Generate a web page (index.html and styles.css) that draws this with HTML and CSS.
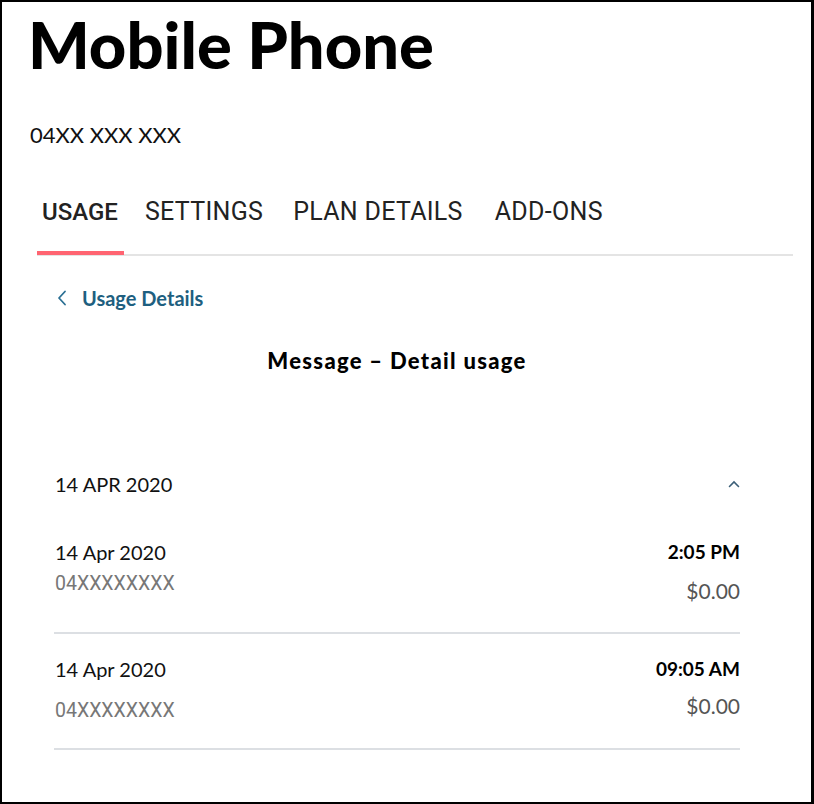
FILE: index.html
```html
<!DOCTYPE html>
<html lang="en">
  <head>
    <meta charset="UTF-8" />
    <meta name="viewport" content="width=device-width, initial-scale=1.0" />
    <title>Mobile Phone</title>
    <link rel="stylesheet" href="styles.css">
  </head>
  <body>
    <div class="page">
      <h1>Mobile Phone</h1>
      <div class="phone-number">04XX XXX XXX</div>

      <div class="tabs">
        <a class="tab active" href="#">USAGE</a>
        <a class="tab" href="#">SETTINGS</a>
        <a class="tab" href="#">PLAN DETAILS</a>
        <a class="tab" href="#">ADD-ONS</a>
      </div>

      <div class="content">
        <a class="back-link" href="#">
          <svg width="10" height="16" viewBox="0 0 10 16">
            <path d="M8 1.5 L2 8 L8 14.5" fill="none" stroke="#2a6f93" stroke-width="1.8" stroke-linecap="round" stroke-linejoin="round" />
          </svg>
          <span>Usage Details</span>
        </a>

        <h2>Message – Detail usage</h2>

        <div class="day">
          <div class="day-header">
            <span>14 APR 2020</span>
            <svg width="12" height="8" viewBox="0 0 12 8">
              <path d="M1.5 6.5 L6 2 L10.5 6.5" fill="none" stroke="#3c5f78" stroke-width="1.6" stroke-linecap="round" />
            </svg>
          </div>

          <div class="usage-row">
            <div class="row-left">
              <div class="row-date">14 Apr 2020</div>
              <div class="row-number">04XXXXXXXX</div>
            </div>
            <div class="row-right">
              <div class="row-time">2:05 PM</div>
              <div class="row-cost">$0.00</div>
            </div>
          </div>

          <div class="usage-row">
            <div class="row-left">
              <div class="row-date">14 Apr 2020</div>
              <div class="row-number">04XXXXXXXX</div>
            </div>
            <div class="row-right">
              <div class="row-time">09:05 AM</div>
              <div class="row-cost">$0.00</div>
            </div>
          </div>
        </div>
      </div>
    </div>
  </body>
</html>
```

FILE: styles.css
```css
body {
  margin: 0;
  padding: 0;
  background: #fff;
  font-family: Lato, "Noto Sans", sans-serif;
  color: #111;
}
.page {
  box-sizing: border-box;
  width: 814px;
  height: 804px;
  border: 2px solid #000;
  border-right-width: 3px;
  padding: 0 18px 0 28px;
}
h1 {
  margin: 6px 0 0 -2px;
  font-size: 65px;
  line-height: 72px;
  font-weight: 900;
  color: #000;
}
.phone-number {
  margin-top: 42px;
  font-size: 22px;
  line-height: 26px;
  color: #111;
}
.tabs {
  display: flex;
  margin: 38px 0 0 7px;
  border-bottom: 2px solid #e4e4e4;
}
.tab {
  position: relative;
  padding: 12px 0 28px;
  margin-right: 30px;
  font-family: Roboto, "Noto Sans", sans-serif;
  font-size: 25px;
  line-height: 28px;
  color: #222;
  text-decoration: none;
  letter-spacing: 0.3px;
}
.tab.active {
  padding-left: 5px;
  padding-right: 6px;
  margin-right: 21px;
  font-size: 24px;
  font-weight: 500;
  letter-spacing: 0;
}
.tab.active::after {
  content: "";
  position: absolute;
  left: 0;
  right: 0;
  bottom: -1px;
  height: 4px;
  background: #ff6471;
}
.tab:nth-child(3) {
  margin-right: 32px;
}
.content {
  padding: 0 53px 0 24px;
}
.back-link {
  display: flex;
  align-items: center;
  gap: 15px;
  margin: 30px 0 0 3px;
  color: #1e5f80;
  font-weight: 700;
  font-size: 20px;
  text-decoration: none;
}
h2 {
  margin: 38px 0 0;
  text-align: center;
  font-size: 22px;
  line-height: 26px;
  font-weight: 900;
  letter-spacing: 1.3px;
  color: #000;
}
.day {
  margin-top: 98px;
}
.day-header {
  display: flex;
  justify-content: space-between;
  align-items: center;
  padding-left: 1px;
  font-size: 20px;
  line-height: 24px;
}
.usage-row {
  display: flex;
  justify-content: space-between;
  padding: 44px 0 29px 1px;
  border-bottom: 2px solid #dcdfe3;
}
.usage-row + .usage-row {
  padding-top: 23px;
  padding-bottom: 26px;
}
.row-date {
  font-size: 20px;
  line-height: 24px;
}
.row-time {
  font-size: 19px;
  line-height: 24px;
  font-weight: 700;
  color: #000;
  text-align: right;
}
.row-number {
  margin-top: 8px;
  font-family: Roboto, "Noto Sans", sans-serif;
  font-size: 19.5px;
  color: #777;
}
.usage-row + .usage-row .row-number {
  margin-top: 18px;
}
.row-cost {
  margin-top: 14px;
  font-size: 21px;
  color: #555;
  text-align: right;
}
.usage-row + .usage-row .row-cost {
  margin-top: 12px;
}
```
